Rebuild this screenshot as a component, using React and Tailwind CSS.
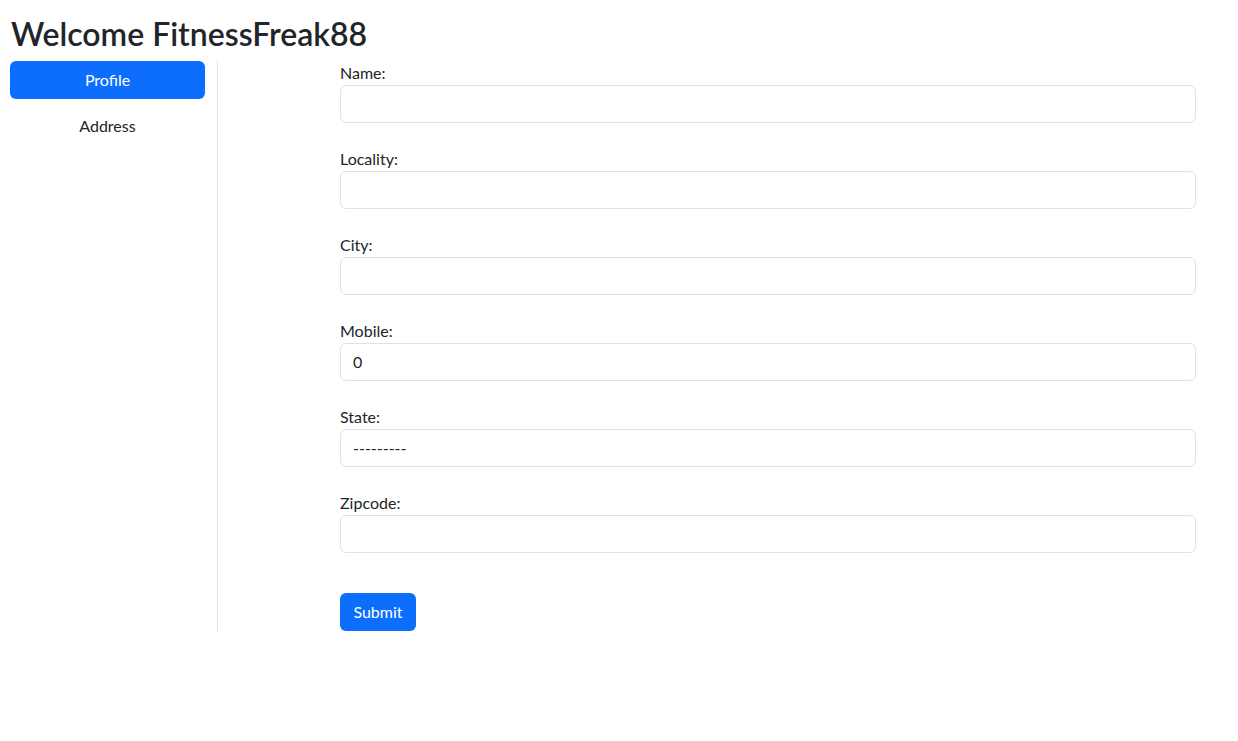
export default function App() {
  const fields = [
    { label: "Name:", value: "" },
    { label: "Locality:", value: "" },
    { label: "City:", value: "" },
    { label: "Mobile:", value: "0" },
    { label: "State:", value: "---------", select: true },
    { label: "Zipcode:", value: "" },
  ];
  return (
    <div
      className="min-h-[741px] bg-white text-[#212529]"
      style={{ fontFamily: '"Segoe UI", Lato, "Noto Sans", sans-serif' }}
    >
      <h2 className="pl-[11px] pt-[15px] mb-[8px] text-[32px] font-semibold leading-[38px]">
        Welcome FitnessFreak88
      </h2>
      <div className="flex">
        <div className="w-[218px] shrink-0 pl-[10px] pr-[12px] border-r border-[#dee2e6] flex flex-col gap-[8px]">
          <button className="h-[38px] w-full rounded-[6px] bg-[#0d6efd] text-white text-[16px] leading-[24px]">
            Profile
          </button>
          <button className="h-[38px] w-full rounded-[6px] text-[#212529] text-[16px] leading-[24px]">
            Address
          </button>
        </div>
        <form className="ml-[122px] w-[856px] flex flex-col">
          {fields.map((f) => (
            <div key={f.label} className="mb-[24px] flex flex-col">
              <label className="text-[16px] leading-[24px]">{f.label}</label>
              <div className="h-[38px] rounded-[6px] border border-[#dee2e6] bg-white px-[12px] text-[16px] leading-[36px] text-[#212529]">
                {f.value}
              </div>
            </div>
          ))}
          <div className="pt-[16px]">
            <button
              type="button"
              className="h-[38px] w-[76px] rounded-[6px] bg-[#0d6efd] text-white text-[16px] leading-[24px]"
            >
              Submit
            </button>
          </div>
        </form>
      </div>
    </div>
  );
}
